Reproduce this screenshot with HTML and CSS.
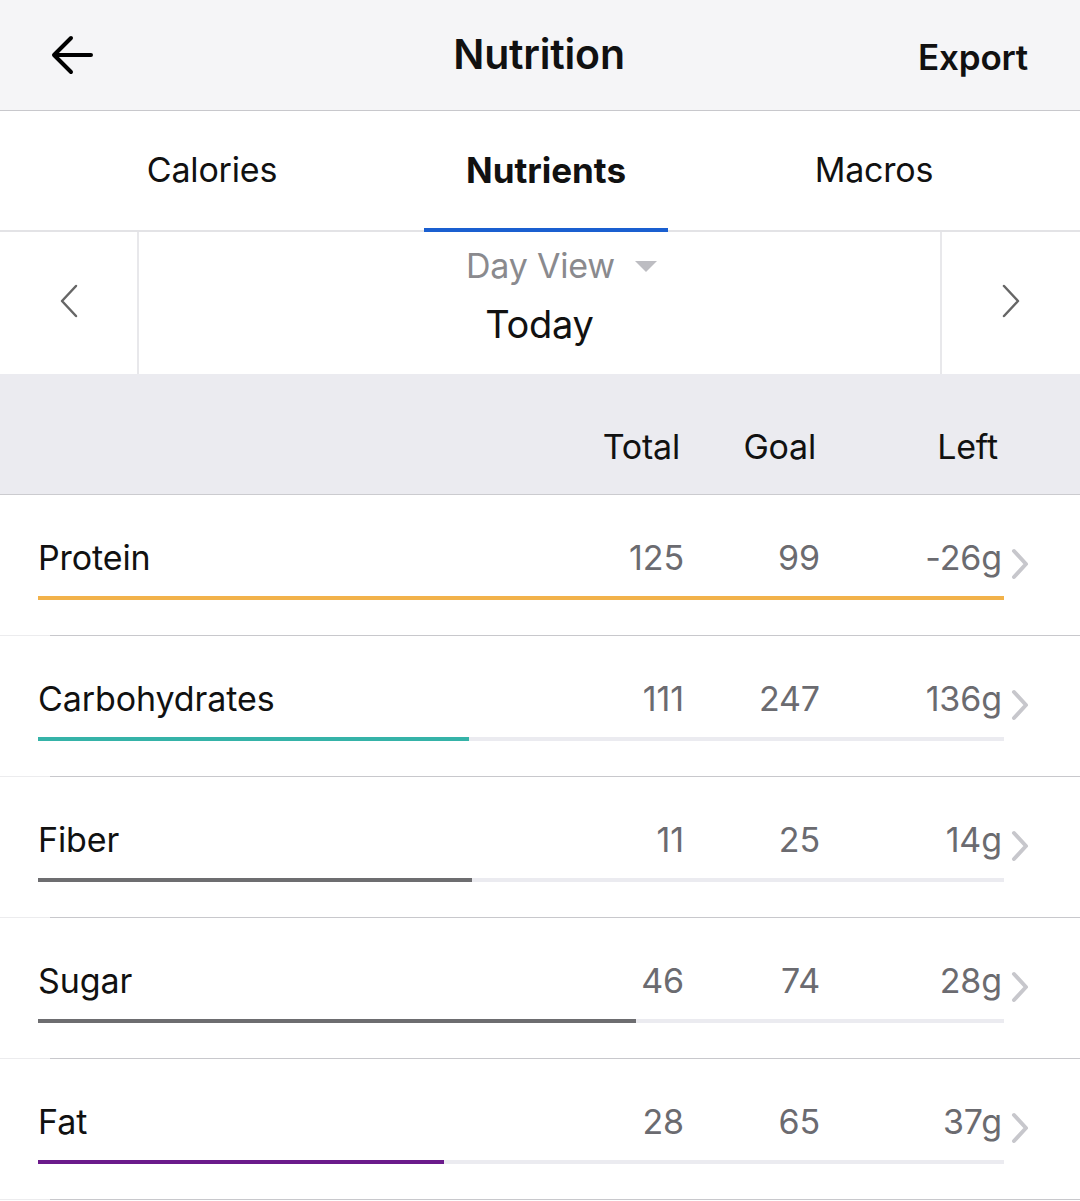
FILE: index.html
```html
<!DOCTYPE html>
<html>
<head>
<meta charset="utf-8">
<link rel="stylesheet" href="styles.css">
</head>
<body>
<div class="app">
  <header class="nav">
    <svg class="back" width="44" height="44" viewBox="0 0 44 44"><path d="M41 22H5M21 5L4 22l17 17" fill="none" stroke="#000" stroke-width="4" stroke-linecap="round" stroke-linejoin="round"/></svg>
    <div class="title">Nutrition</div>
    <div class="export">Export</div>
  </header>
  <nav class="tabs">
    <div class="tab">Calories</div>
    <div class="tab active">Nutrients</div>
    <div class="tab">Macros</div>
  </nav>
  <section class="datebar">
    <div class="arrow left"><svg width="22" height="36" viewBox="0 0 22 36"><path d="M18 3L4 18l14 15" fill="none" stroke="#666" stroke-width="2.5" stroke-linecap="round" stroke-linejoin="round"/></svg></div>
    <div class="datecenter">
      <div class="dayview">Day View <span class="tri"></span></div>
      <div class="today">Today</div>
    </div>
    <div class="arrow right"><svg width="22" height="36" viewBox="0 0 22 36"><path d="M4 3l14 15L4 33" fill="none" stroke="#666" stroke-width="2.5" stroke-linecap="round" stroke-linejoin="round"/></svg></div>
  </section>
  <div class="thead">
    <div></div>
    <div class="th">Total</div>
    <div class="th">Goal</div>
    <div class="th">Left</div>
    <div></div>
  </div>
  <div class="rows">
    <div class="row">
      <div class="name">Protein</div><div class="num">125</div><div class="num">99</div><div class="num">-26g</div>
      <div class="chev"><svg width="20" height="32" viewBox="0 0 20 32"><path d="M4 3l12 13L4 29" fill="none" stroke="#c7c7cc" stroke-width="4" stroke-linecap="round" stroke-linejoin="round"/></svg></div>
      <div class="bar"><div class="fill protein" style="width:100%"></div></div>
    </div>
    <div class="row">
      <div class="name">Carbohydrates</div><div class="num">111</div><div class="num">247</div><div class="num">136g</div>
      <div class="chev"><svg width="20" height="32" viewBox="0 0 20 32"><path d="M4 3l12 13L4 29" fill="none" stroke="#c7c7cc" stroke-width="4" stroke-linecap="round" stroke-linejoin="round"/></svg></div>
      <div class="bar"><div class="fill carbs" style="width:44.6%"></div></div>
    </div>
    <div class="row">
      <div class="name">Fiber</div><div class="num">11</div><div class="num">25</div><div class="num">14g</div>
      <div class="chev"><svg width="20" height="32" viewBox="0 0 20 32"><path d="M4 3l12 13L4 29" fill="none" stroke="#c7c7cc" stroke-width="4" stroke-linecap="round" stroke-linejoin="round"/></svg></div>
      <div class="bar"><div class="fill fiber" style="width:44.9%"></div></div>
    </div>
    <div class="row">
      <div class="name">Sugar</div><div class="num">46</div><div class="num">74</div><div class="num">28g</div>
      <div class="chev"><svg width="20" height="32" viewBox="0 0 20 32"><path d="M4 3l12 13L4 29" fill="none" stroke="#c7c7cc" stroke-width="4" stroke-linecap="round" stroke-linejoin="round"/></svg></div>
      <div class="bar"><div class="fill sugar" style="width:61.9%"></div></div>
    </div>
    <div class="row">
      <div class="name">Fat</div><div class="num">28</div><div class="num">65</div><div class="num">37g</div>
      <div class="chev"><svg width="20" height="32" viewBox="0 0 20 32"><path d="M4 3l12 13L4 29" fill="none" stroke="#c7c7cc" stroke-width="4" stroke-linecap="round" stroke-linejoin="round"/></svg></div>
      <div class="bar"><div class="fill fat" style="width:42%"></div></div>
    </div>
  </div>
</div>
</body>
</html>
```
FILE: styles.css
```css
* { box-sizing: border-box; }
html, body { margin: 0; padding: 0; background: #fff; }
body { font-family: Inter, "Noto Sans", sans-serif; color: #111; }
.app { width: 1080px; }

.nav {
  height: 111px;
  background: #f5f5f7;
  border-bottom: 1px solid #c8c8cc;
  display: grid;
  grid-template-columns: 1fr auto 1fr;
  align-items: center;
  padding: 0 52px 0 50px;
}
.back { display: block; }
.title { font-size: 41px; font-weight: 600; letter-spacing: -0.2px; margin-top: -2px; }
.export { justify-self: end; font-size: 35px; font-weight: 600; letter-spacing: -0.2px; margin-top: 4px; }

.tabs {
  height: 121px;
  display: grid;
  grid-template-columns: 424px 244px 1fr;
  border-bottom: 2px solid #e3e3e6;
}
.tab {
  display: flex; align-items: center; justify-content: center;
  font-size: 34px; color: #111; letter-spacing: -0.2px;
  padding-bottom: 2px;
}
.tab.active { font-weight: 700; font-size: 35px; letter-spacing: 0; border-bottom: 4px solid #1a5fd0; margin-bottom: -2px; padding-bottom: 0; }

.datebar {
  height: 142px;
  display: grid;
  grid-template-columns: 139px 1fr 140px;
}
.arrow { display: flex; align-items: center; justify-content: center; padding-bottom: 4px; }
.arrow.left { border-right: 2px solid #e8e8eb; }
.arrow.right { border-left: 2px solid #e8e8eb; }
.datecenter { display: flex; flex-direction: column; align-items: center; padding-top: 12px; }
.dayview { font-size: 34px; color: #8a8a8e; line-height: 44px; display: flex; align-items: center; padding-left: 44px; letter-spacing: -0.2px; }
.tri { display: inline-block; width: 0; height: 0; margin-left: 20px; border-left: 11px solid transparent; border-right: 11px solid transparent; border-top: 11px solid #bdbdc2; }
.today { font-size: 38px; color: #111; line-height: 52px; margin-top: 10px; letter-spacing: -0.3px; }

.thead, .row {
  display: grid;
  grid-template-columns: 1fr 140px 136px 182px 28px;
  padding: 0 50px 0 38px;
}
.thead {
  height: 121px;
  background: #ebebf0;
  border-bottom: 1px solid #cbcbcf;
  align-items: center;
  padding-top: 24px;
}
.th { text-align: right; font-size: 34px; color: #111; padding-right: 4px; letter-spacing: -0.2px; }

.row {
  height: 141px;
  padding-top: 41px;
  grid-template-rows: 44px auto;
  row-gap: 16px;
  background: linear-gradient(to right, #ececee 50px, #c8c8cc 50px) bottom / 100% 1px no-repeat;
}
.name { font-size: 34px; line-height: 44px; color: #111; letter-spacing: -0.1px; }
.num { font-size: 34px; line-height: 44px; color: #6b6b70; text-align: right; letter-spacing: -0.1px; }
.chev { display: flex; align-items: center; justify-content: flex-end; padding-top: 12px; }
.chev svg { display: block; }
.bar {
  grid-column: 1 / 5;
  height: 4px;
  margin-right: -2px;
  background: #ebebf0;
}
.fill { height: 100%; }
.protein { background: #f2b24a; }
.carbs { background: #35b3a8; }
.fiber { background: #6d6d70; }
.sugar { background: #6d6d70; }
.fat { background: #6b1a8b; }
```
